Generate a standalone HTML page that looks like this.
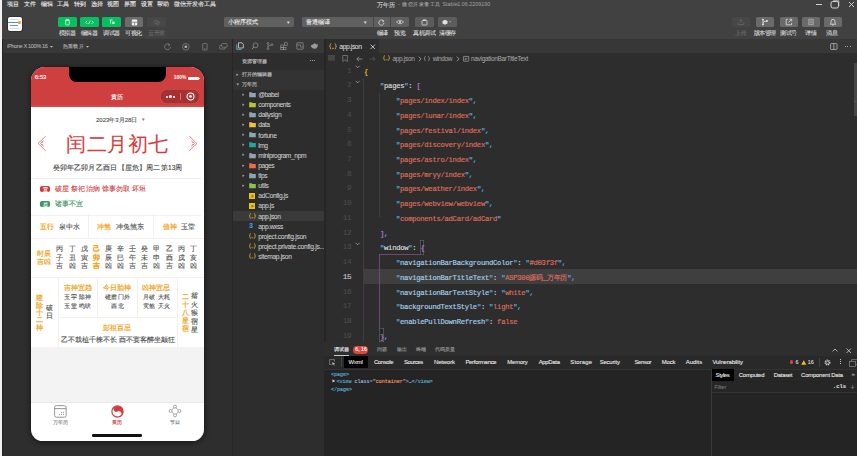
<!DOCTYPE html>
<html><head><meta charset="utf-8">
<style>
*{margin:0;padding:0;box-sizing:border-box}
html,body{width:857px;height:456px;overflow:hidden}
body{background:#2e2e2e;font-family:"Liberation Sans",sans-serif;position:relative}
.a{position:absolute;white-space:nowrap}
svg.a{overflow:visible}
.m{font-family:"Liberation Mono",monospace}
.a{-webkit-text-stroke:0.12px currentColor}
</style></head><body>

<div class="a" style="left:0px;top:0px;width:2px;height:456px;background:#f2f2f2;"></div>
<div class="a" style="left:2px;top:0px;width:855px;height:39px;background:#414141;"></div>
<div class="a " style="left:7.4px;top:1.35px;font-size:6.1px;line-height:6.1px;color:#e8e8e8;">项目</div>
<div class="a " style="left:24.099999999999998px;top:1.35px;font-size:6.1px;line-height:6.1px;color:#e8e8e8;">文件</div>
<div class="a " style="left:40.800000000000004px;top:1.35px;font-size:6.1px;line-height:6.1px;color:#e8e8e8;">编辑</div>
<div class="a " style="left:57.400000000000006px;top:1.35px;font-size:6.1px;line-height:6.1px;color:#e8e8e8;">工具</div>
<div class="a " style="left:74.0px;top:1.35px;font-size:6.1px;line-height:6.1px;color:#e8e8e8;">转到</div>
<div class="a " style="left:90.60000000000001px;top:1.35px;font-size:6.1px;line-height:6.1px;color:#e8e8e8;">选择</div>
<div class="a " style="left:107.2px;top:1.35px;font-size:6.1px;line-height:6.1px;color:#e8e8e8;">视图</div>
<div class="a " style="left:123.9px;top:1.35px;font-size:6.1px;line-height:6.1px;color:#e8e8e8;">界面</div>
<div class="a " style="left:140.5px;top:1.35px;font-size:6.1px;line-height:6.1px;color:#e8e8e8;">设置</div>
<div class="a " style="left:157.1px;top:1.35px;font-size:6.1px;line-height:6.1px;color:#e8e8e8;">帮助</div>
<div class="a " style="left:173.7px;top:1.35px;font-size:6.1px;line-height:6.1px;color:#e8e8e8;">微信开发者工具</div>
<div class="a " style="left:376.6px;top:1.65px;font-size:6.1px;line-height:6.1px;color:#d8d8d8;">万年历</div>
<div class="a " style="left:397.8px;top:1.95px;font-size:5.5px;line-height:5.5px;color:#a0a0a0;">-</div>
<div class="a " style="left:402px;top:2.05px;font-size:5.3px;line-height:5.3px;color:#a0a0a0;letter-spacing:0.5px">微信开发者工具</div>
<div class="a " style="left:442.4px;top:2.00px;font-size:5.4px;line-height:5.4px;color:#a0a0a0;-webkit-text-stroke:0">Stable</div>
<div class="a " style="left:457.2px;top:2.00px;font-size:5.4px;line-height:5.4px;color:#a0a0a0;-webkit-text-stroke:0">1.06.2209190</div>
<div class="a" style="left:816px;top:3.5px;width:6px;height:0.8px;background:#d0d0d0;"></div>
<svg class="a" style="left:830px;top:0px;" width="10" height="9" viewBox="0 0 10 9"><rect x="1" y="1.5" width="7.5" height="6.5" rx="1.8" fill="none" stroke="#d8d8d8" stroke-width="1"/><path d="M3.5 1.5 V0.8 H8.8 V6" fill="none" stroke="#d8d8d8" stroke-width="0.8"/></svg>
<svg class="a" style="left:848px;top:1px;" width="7" height="7" viewBox="0 0 7 7"><path d="M1 1 L6 6 M6 1 L1 6" stroke="#d8d8d8" stroke-width="0.9"/></svg>
<div class="a" style="left:7.5px;top:16.7px;width:14px;height:14px;background:#fbfbfb;border-radius:2px;box-shadow:0 0 0 0.8px #2c2c2c"></div>
<div class="a" style="left:8.3px;top:21.6px;width:10px;height:1.6px;background:#3a9ad0;"></div>
<div class="a" style="left:17.6px;top:20.9px;width:3.6px;height:2.8px;background:#f2a04a;border-radius:0.8px"></div>
<div class="a" style="left:9.6px;top:24.5px;width:8.6px;height:0.9px;background:#8a8a8a;"></div>
<div class="a" style="left:9.6px;top:19px;width:9px;height:0.4px;background:#dddddd;"></div>
<div class="a" style="left:9.6px;top:28.2px;width:9px;height:0.4px;background:#dddddd;"></div>
<div class="a" style="left:58px;top:16.9px;width:18.7px;height:10px;background:#07c160;border-radius:1.6px"></div>
<div class="a" style="left:80px;top:16.9px;width:18.9px;height:10px;background:#07c160;border-radius:1.6px"></div>
<div class="a" style="left:102.2px;top:16.9px;width:18.8px;height:10px;background:#07c160;border-radius:1.6px"></div>
<div class="a" style="left:124.6px;top:16.9px;width:18.2px;height:10px;background:#6c6c6c;border-radius:1.6px"></div>
<div class="a" style="left:147.4px;top:16.9px;width:18.4px;height:10px;background:#474747;border-radius:1.6px"></div>
<svg class="a" style="left:64.6px;top:18.8px;" width="5" height="7" viewBox="0 0 5 7"><rect x="0.7" y="0.6" width="3.5" height="5.3" rx="0.6" fill="none" stroke="#e6fff0" stroke-width="0.75"/><path d="M0.8 1.3 H4.1" stroke="#e6fff0" stroke-width="0.9"/></svg>
<svg class="a" style="left:85px;top:19.6px;" width="9" height="5" viewBox="0 0 9 5"><path d="M2.2 0.8 L0.7 2.3 L2.2 3.8 M6.8 0.8 L8.3 2.3 L6.8 3.8 M5.3 0.6 L3.7 4" fill="none" stroke="#e6fff0" stroke-width="0.8"/></svg>
<svg class="a" style="left:108.6px;top:19.2px;" width="6" height="6" viewBox="0 0 6 6"><path d="M0.6 1 H3.6 M1.6 1 V4.6" stroke="#e6fff0" stroke-width="0.8"/><rect x="3.2" y="2.6" width="2.4" height="2.4" fill="#d6f5e0"/></svg>
<svg class="a" style="left:130.5px;top:18.8px;" width="7" height="7" viewBox="0 0 7 7"><rect x="0.8" y="0.6" width="5.4" height="5.8" rx="0.8" fill="#f0f0f0"/><path d="M1 3.2 H6 M3.6 3.2 V6.4" stroke="#6c6c6c" stroke-width="0.7"/></svg>
<svg class="a" style="left:153px;top:18.8px;" width="8" height="7" viewBox="0 0 8 7"><circle cx="3" cy="3.2" r="2" fill="none" stroke="#666" stroke-width="0.7"/><circle cx="5" cy="4" r="1.6" fill="none" stroke="#666" stroke-width="0.7"/></svg>
<div class="a " style="left:58.8px;top:30.30px;font-size:6px;line-height:6px;color:#d6d6d6;letter-spacing:-0.5px">模拟器</div>
<div class="a " style="left:80.8px;top:30.30px;font-size:6px;line-height:6px;color:#d6d6d6;letter-spacing:-0.5px">编辑器</div>
<div class="a " style="left:103px;top:30.30px;font-size:6px;line-height:6px;color:#d6d6d6;letter-spacing:-0.5px">调试器</div>
<div class="a " style="left:125.3px;top:30.30px;font-size:6px;line-height:6px;color:#d6d6d6;letter-spacing:-0.5px">可视化</div>
<div class="a " style="left:148.4px;top:30.30px;font-size:6px;line-height:6px;color:#707070;letter-spacing:-0.5px">云开发</div>
<div class="a" style="left:224px;top:16.9px;width:70px;height:10px;background:#606060;border-radius:1.6px"></div>
<div class="a " style="left:228px;top:19.90px;font-size:5.8px;line-height:5.8px;color:#e6e6e6;">小程序模式</div>
<div class="a " style="left:287px;top:19.50px;font-size:5px;line-height:5px;color:#ddd;">▾</div>
<div class="a" style="left:302px;top:16.9px;width:107px;height:10px;background:#606060;border-radius:1.6px"></div>
<div class="a " style="left:306px;top:19.90px;font-size:5.8px;line-height:5.8px;color:#e6e6e6;">普通编译</div>
<div class="a " style="left:364px;top:19.50px;font-size:5px;line-height:5px;color:#ddd;">▾</div>
<div class="a" style="left:372.5px;top:16.9px;width:0.8px;height:10px;background:#474747;"></div>
<div class="a" style="left:390px;top:16.9px;width:0.8px;height:10px;background:#474747;"></div>
<svg class="a" style="left:377.5px;top:18.5px;" width="7" height="7" viewBox="0 0 7 7"><path d="M5.6 2.2 A2.6 2.6 0 1 0 6 4" fill="none" stroke="#e0e0e0" stroke-width="0.8"/><path d="M4.6 0.8 L6 2.4 L4.2 3" fill="none" stroke="#e0e0e0" stroke-width="0.7"/></svg>
<svg class="a" style="left:395.5px;top:19px;" width="8" height="6" viewBox="0 0 8 6"><path d="M0.5 3 Q4 -0.5 7.5 3 Q4 6.5 0.5 3Z" fill="none" stroke="#e0e0e0" stroke-width="0.7"/><circle cx="4" cy="3" r="1" fill="#e0e0e0"/></svg>
<div class="a" style="left:415px;top:16.9px;width:19px;height:10px;background:#5c5c5c;border-radius:1.6px"></div>
<div class="a" style="left:438px;top:16.9px;width:18.8px;height:10px;background:#5c5c5c;border-radius:1.6px"></div>
<svg class="a" style="left:421px;top:18.5px;" width="7" height="7" viewBox="0 0 7 7"><rect x="1" y="1.5" width="5" height="4.5" rx="0.6" fill="none" stroke="#e0e0e0" stroke-width="0.8"/><path d="M2.5 1.5 V0.5 H4.5 V1.5" fill="none" stroke="#e0e0e0" stroke-width="0.6"/></svg>
<svg class="a" style="left:442px;top:18.8px;" width="10" height="6" viewBox="0 0 10 6"><path d="M0.5 2 L3 0.7 L5.5 2 V4.5 L3 5.8 L0.5 4.5Z" fill="#e0e0e0"/><path d="M7.2 2.6 L9 2.6 L8.1 3.6Z" fill="#ddd"/></svg>
<div class="a " style="left:376.5px;top:30.30px;font-size:6px;line-height:6px;color:#d6d6d6;letter-spacing:-0.5px">编译</div>
<div class="a " style="left:394.2px;top:30.30px;font-size:6px;line-height:6px;color:#d6d6d6;letter-spacing:-0.5px">预览</div>
<div class="a " style="left:413px;top:30.30px;font-size:6px;line-height:6px;color:#d6d6d6;letter-spacing:-0.5px">真机调试</div>
<div class="a " style="left:439px;top:30.30px;font-size:6px;line-height:6px;color:#d6d6d6;letter-spacing:-0.5px">清缓存</div>
<div class="a" style="left:731.5px;top:16.9px;width:18.5px;height:10px;background:#474747;border-radius:1.6px"></div>
<div class="a" style="left:755.7px;top:16.9px;width:18.3px;height:10px;background:#6a6a6a;border-radius:1.6px"></div>
<div class="a" style="left:779.5px;top:16.9px;width:18px;height:10px;background:#6a6a6a;border-radius:1.6px"></div>
<div class="a" style="left:801.5px;top:16.9px;width:18px;height:10px;background:#6a6a6a;border-radius:1.6px"></div>
<div class="a" style="left:823.7px;top:16.9px;width:18.3px;height:10px;background:#6a6a6a;border-radius:1.6px"></div>
<svg class="a" style="left:737px;top:18.3px;" width="8" height="8" viewBox="0 0 8 8"><path d="M4 5 V1.5 M2.5 3 L4 1.5 L5.5 3 M1.2 4.5 V6.5 H6.8 V4.5" fill="none" stroke="#6a6a6a" stroke-width="0.7"/></svg>
<svg class="a" style="left:761px;top:18.3px;" width="8" height="8" viewBox="0 0 8 8"><circle cx="2" cy="1.6" r="0.9" fill="#eee"/><circle cx="2" cy="6.4" r="0.9" fill="#eee"/><circle cx="6" cy="3" r="0.9" fill="#eee"/><path d="M2 1.6 V6.4 M2 5 Q2 3.2 6 3" fill="none" stroke="#eee" stroke-width="0.7"/></svg>
<svg class="a" style="left:785px;top:18.3px;" width="8" height="8" viewBox="0 0 8 8"><path d="M3 1.3 H1.2 V6.8 H6.6 V5" fill="none" stroke="#eee" stroke-width="0.7"/><path d="M3.5 4.5 L6.5 1.3 M4.5 1.2 H6.7 V3.4" fill="none" stroke="#eee" stroke-width="0.7"/></svg>
<svg class="a" style="left:807px;top:18.3px;" width="8" height="8" viewBox="0 0 8 8"><rect x="1.2" y="0.8" width="5.6" height="6.4" rx="0.5" fill="#9a9a9a"/><path d="M2.3 2.5 H5.7 M2.3 4 H5.7 M2.3 5.5 H5.7" stroke="#6a6a6a" stroke-width="0.6"/></svg>
<svg class="a" style="left:829px;top:18.3px;" width="8" height="8" viewBox="0 0 8 8"><path d="M2 5.5 V3.5 Q2 1.3 4 1.3 Q6 1.3 6 3.5 V5.5 L6.8 6.2 H1.2Z" fill="none" stroke="#eee" stroke-width="0.7"/><circle cx="4" cy="6.9" r="0.6" fill="#eee"/></svg>
<div class="a " style="left:735px;top:30.30px;font-size:6px;line-height:6px;color:#6e6e6e;letter-spacing:-0.5px">上传</div>
<div class="a " style="left:753.8px;top:30.30px;font-size:6px;line-height:6px;color:#d6d6d6;letter-spacing:-0.5px">版本管理</div>
<div class="a " style="left:780px;top:30.30px;font-size:6px;line-height:6px;color:#d6d6d6;letter-spacing:-0.5px">测试号</div>
<div class="a " style="left:805px;top:30.30px;font-size:6px;line-height:6px;color:#d6d6d6;letter-spacing:-0.5px">详情</div>
<div class="a " style="left:826.2px;top:30.30px;font-size:6px;line-height:6px;color:#d6d6d6;letter-spacing:-0.5px">消息</div>
<div class="a" style="left:2px;top:39px;width:1px;height:417px;background:#232323;"></div>
<div class="a" style="left:3px;top:39px;width:229px;height:14px;background:#383838;"></div>
<div class="a" style="left:3px;top:53px;width:229px;height:403px;background:#2e2e2e;"></div>
<div class="a " style="left:7px;top:43.80px;font-size:5.6px;line-height:5.6px;color:#a8a8a8;letter-spacing:-0.359px;">iPhone X 100% 16</div>
<svg class="a" style="left:49.6px;top:45.8px;" width="3" height="2" viewBox="0 0 3 2"><path d="M0 0 H3 L1.5 1.8Z" fill="#bbb"/></svg>
<div class="a " style="left:63px;top:43.90px;font-size:5.4px;line-height:5.4px;color:#a8a8a8;">热重载 开</div>
<svg class="a" style="left:85.8px;top:45.8px;" width="3" height="2" viewBox="0 0 3 2"><path d="M0 0 H3 L1.5 1.8Z" fill="#bbb"/></svg>
<svg class="a" style="left:164px;top:43px;" width="7" height="7" viewBox="0 0 7 7"><path d="M5.8 2 A2.9 2.9 0 1 0 6.4 4" fill="none" stroke="#8a8a8a" stroke-width="0.7"/><path d="M4.2 0.6 L5.9 2.1 L4 2.8" fill="none" stroke="#8a8a8a" stroke-width="0.6"/></svg>
<svg class="a" style="left:182.3px;top:42.8px;" width="8" height="8" viewBox="0 0 8 8"><circle cx="3.8" cy="3.8" r="3.3" fill="none" stroke="#8a8a8a" stroke-width="0.7"/><circle cx="3.8" cy="3.8" r="1.3" fill="#bbb"/></svg>
<svg class="a" style="left:201.5px;top:43px;" width="6" height="8" viewBox="0 0 6 8"><rect x="0.7" y="0.6" width="4.4" height="6.4" rx="0.6" fill="none" stroke="#8a8a8a" stroke-width="0.7"/><path d="M2.2 5.6 H3.6" stroke="#8a8a8a" stroke-width="0.6"/></svg>
<svg class="a" style="left:218.5px;top:43px;" width="9" height="7" viewBox="0 0 9 7"><rect x="0.6" y="2.4" width="5.6" height="3.6" rx="1" fill="none" stroke="#8a8a8a" stroke-width="0.7"/><rect x="2.6" y="0.6" width="5.6" height="3.6" rx="1" fill="#363636" stroke="#8a8a8a" stroke-width="0.7"/></svg>
<div class="a" style="left:31px;top:66.6px;width:173px;height:374.4px;border-radius:14px 14px 11.5px 11.5px;background:#fff;overflow:hidden;box-shadow:0 1px 5px 1px rgba(0,0,0,0.45)">
<div class="a" style="left:0px;top:0.0px;width:173px;height:40px;background:#d03f3f;"></div>
<div class="a" style="left:0px;top:38.4px;width:173px;height:1.6px;background:#d94646;"></div>
<div class="a" style="left:37.7px;top:-6.6px;width:97.1px;height:21.8px;background:#000;border-radius:0 0 7.5px 7.5px"></div>
<div class="a " style="left:3.8px;top:8.05px;font-size:5.9px;line-height:5.9px;color:#fff;-webkit-text-stroke:0.15px #fff">6:53</div>
<div class="a " style="left:142.8px;top:9.15px;font-size:4.9px;line-height:4.9px;color:#fff;font-weight:bold;-webkit-text-stroke:0">100%</div>
<div class="a" style="left:157.2px;top:10.0px;width:10.5px;height:3.6px;background:#fff;border-radius:0.8px"></div>
<div class="a" style="left:168px;top:11.0px;width:0.8px;height:1.6px;background:#fff;"></div>
<div class="a " style="left:-63.8px;width:300px;text-align:center;top:27.60px;font-size:6.2px;line-height:6.2px;color:#fff;">黄历</div>
<div class="a" style="left:129.4px;top:22.7px;width:39.8px;height:14.3px;background:#a93030;border-radius:7.2px;box-shadow:inset 0 0 0 0.5px rgba(255,255,255,0.25)"></div>
<div class="a" style="left:134.8px;top:29.1px;width:1.9px;height:1.9px;background:#fff;border-radius:50%"></div>
<div class="a" style="left:138.1px;top:28.5px;width:3px;height:3px;background:#fff;border-radius:50%"></div>
<div class="a" style="left:142.4px;top:29.1px;width:1.9px;height:1.9px;background:#fff;border-radius:50%"></div>
<div class="a" style="left:149.3px;top:26.4px;width:0.6px;height:7.2px;background:rgba(255,255,255,0.35);"></div>
<svg class="a" style="left:154.5px;top:25.6px;" width="9" height="9" viewBox="0 0 9 9"><circle cx="4.5" cy="4.4" r="3.5" fill="none" stroke="#fff" stroke-width="1.05"/><circle cx="4.5" cy="4.4" r="1.3" fill="#fff"/></svg>
<div class="a " style="left:65px;top:50.30px;font-size:6.0px;line-height:6.0px;color:#505050;">2023年3月28日</div>
<div class="a " style="left:110.5px;top:51.15px;font-size:4.5px;line-height:4.5px;color:#777;">▾</div>
<svg class="a" style="left:6px;top:68.4px;" width="10" height="17" viewBox="0 0 10 17"><path d="M8.8 1.1 L1.1 8.5 L8.8 15.9" fill="none" stroke="#e07a7a" stroke-width="0.9"/><path d="M6.8 5.6 L3.4 8.5 L6.8 11.4 M4 7.3 H6.2 M4 9.7 H6.2" fill="none" stroke="#e07a7a" stroke-width="0.8"/></svg>
<svg class="a" style="left:157px;top:68.4px;" width="10" height="17" viewBox="0 0 10 17"><path d="M1.2 1.1 L8.9 8.5 L1.2 15.9" fill="none" stroke="#e07a7a" stroke-width="0.9"/><path d="M3.2 5.6 L6.6 8.5 L3.2 11.4 M6 7.3 H3.8 M6 9.7 H3.8" fill="none" stroke="#e07a7a" stroke-width="0.8"/></svg>
<div class="a " style="left:-63.400000000000006px;width:300px;text-align:center;top:67.80px;font-size:20.4px;line-height:20.4px;color:#d03f3f;letter-spacing:0.45px">闰二月初七</div>
<div class="a " style="left:21.5px;top:98.62px;font-size:6.55px;line-height:6.55px;color:#444;word-spacing:-1.1px">癸卯年 乙卯月 乙酉日 【屋危】 周二 第13周</div>
<div class="a" style="left:0px;top:111.2px;width:170px;height:0.6px;background:#eee;"></div>
<div class="a" style="left:9.3px;top:119.2px;width:10px;height:6.6px;background:#d03f3f;border-radius:1.8px"></div>
<div class="a " style="left:-135.7px;width:300px;text-align:center;top:120.10px;font-size:5.2px;line-height:5.2px;color:#fff;">宜</div>
<div class="a " style="left:23.7px;top:119.00px;font-size:6.6px;line-height:6.6px;color:#d03f3f;">破屋 祭祀 治病 馀事勿取 坏垣</div>
<div class="a" style="left:9.3px;top:134.2px;width:10px;height:6.6px;background:#3b9962;border-radius:1.8px"></div>
<div class="a " style="left:-135.7px;width:300px;text-align:center;top:135.10px;font-size:5.2px;line-height:5.2px;color:#fff;">忌</div>
<div class="a " style="left:23.7px;top:134.30px;font-size:6.6px;line-height:6.6px;color:#3b9962;">诸事不宜</div>
<div class="a" style="left:0px;top:148.2px;width:170px;height:0.6px;background:#f3f1ed;"></div>
<div class="a " style="left:8.9px;top:157.05px;font-size:6.9px;line-height:6.9px;color:#f2a215;-webkit-text-stroke:0.2px #f2a215">五行</div>
<div class="a " style="left:27.6px;top:157.20px;font-size:6.6px;line-height:6.6px;color:#505050;">泉中水</div>
<div class="a" style="left:57.2px;top:147.9px;width:0.6px;height:23.2px;background:#f3f1ed;"></div>
<div class="a " style="left:66px;top:157.05px;font-size:6.9px;line-height:6.9px;color:#f2a215;-webkit-text-stroke:0.2px #f2a215">冲煞</div>
<div class="a " style="left:84.5px;top:157.20px;font-size:6.6px;line-height:6.6px;color:#505050;">冲兔煞东</div>
<div class="a" style="left:122px;top:147.9px;width:0.6px;height:23.2px;background:#f3f1ed;"></div>
<div class="a " style="left:131.5px;top:157.05px;font-size:6.9px;line-height:6.9px;color:#f2a215;-webkit-text-stroke:0.2px #f2a215">值神</div>
<div class="a " style="left:150px;top:157.20px;font-size:6.6px;line-height:6.6px;color:#505050;">玉堂</div>
<div class="a" style="left:0px;top:171.0px;width:173px;height:0.6px;background:#f3f1ed;"></div>
<div class="a " style="left:5.9px;top:183.95px;font-size:6.9px;line-height:6.9px;color:#f2a215;-webkit-text-stroke:0.2px #f2a215">时辰</div>
<div class="a " style="left:5.9px;top:192.75px;font-size:6.9px;line-height:6.9px;color:#f2a215;-webkit-text-stroke:0.2px #f2a215">吉凶</div>
<div class="a " style="left:-121.1px;width:300px;text-align:center;top:179.65px;font-size:6.9px;line-height:6.9px;color:#505050;">丙</div>
<div class="a " style="left:-121.1px;width:300px;text-align:center;top:188.10px;font-size:6.9px;line-height:6.9px;color:#505050;">子</div>
<div class="a " style="left:-121.1px;width:300px;text-align:center;top:196.55px;font-size:6.9px;line-height:6.9px;color:#505050;">吉</div>
<div class="a " style="left:-108.97px;width:300px;text-align:center;top:179.65px;font-size:6.9px;line-height:6.9px;color:#505050;">丁</div>
<div class="a " style="left:-108.97px;width:300px;text-align:center;top:188.10px;font-size:6.9px;line-height:6.9px;color:#505050;">丑</div>
<div class="a " style="left:-108.97px;width:300px;text-align:center;top:196.55px;font-size:6.9px;line-height:6.9px;color:#505050;">凶</div>
<div class="a " style="left:-96.84px;width:300px;text-align:center;top:179.65px;font-size:6.9px;line-height:6.9px;color:#505050;">戊</div>
<div class="a " style="left:-96.84px;width:300px;text-align:center;top:188.10px;font-size:6.9px;line-height:6.9px;color:#505050;">寅</div>
<div class="a " style="left:-96.84px;width:300px;text-align:center;top:196.55px;font-size:6.9px;line-height:6.9px;color:#505050;">吉</div>
<div class="a " style="left:-84.71px;width:300px;text-align:center;top:179.65px;font-size:6.9px;line-height:6.9px;color:#f2a215;-webkit-text-stroke:0.45px #f2a215">己</div>
<div class="a " style="left:-84.71px;width:300px;text-align:center;top:188.10px;font-size:6.9px;line-height:6.9px;color:#f2a215;-webkit-text-stroke:0.45px #f2a215">卯</div>
<div class="a " style="left:-84.71px;width:300px;text-align:center;top:196.55px;font-size:6.9px;line-height:6.9px;color:#f2a215;-webkit-text-stroke:0.45px #f2a215">吉</div>
<div class="a " style="left:-72.58px;width:300px;text-align:center;top:179.65px;font-size:6.9px;line-height:6.9px;color:#505050;">庚</div>
<div class="a " style="left:-72.58px;width:300px;text-align:center;top:188.10px;font-size:6.9px;line-height:6.9px;color:#505050;">辰</div>
<div class="a " style="left:-72.58px;width:300px;text-align:center;top:196.55px;font-size:6.9px;line-height:6.9px;color:#505050;">凶</div>
<div class="a " style="left:-60.45px;width:300px;text-align:center;top:179.65px;font-size:6.9px;line-height:6.9px;color:#505050;">辛</div>
<div class="a " style="left:-60.45px;width:300px;text-align:center;top:188.10px;font-size:6.9px;line-height:6.9px;color:#505050;">巳</div>
<div class="a " style="left:-60.45px;width:300px;text-align:center;top:196.55px;font-size:6.9px;line-height:6.9px;color:#505050;">凶</div>
<div class="a " style="left:-48.31999999999999px;width:300px;text-align:center;top:179.65px;font-size:6.9px;line-height:6.9px;color:#505050;">壬</div>
<div class="a " style="left:-48.31999999999999px;width:300px;text-align:center;top:188.10px;font-size:6.9px;line-height:6.9px;color:#505050;">午</div>
<div class="a " style="left:-48.31999999999999px;width:300px;text-align:center;top:196.55px;font-size:6.9px;line-height:6.9px;color:#505050;">吉</div>
<div class="a " style="left:-36.19px;width:300px;text-align:center;top:179.65px;font-size:6.9px;line-height:6.9px;color:#505050;">癸</div>
<div class="a " style="left:-36.19px;width:300px;text-align:center;top:188.10px;font-size:6.9px;line-height:6.9px;color:#505050;">未</div>
<div class="a " style="left:-36.19px;width:300px;text-align:center;top:196.55px;font-size:6.9px;line-height:6.9px;color:#505050;">吉</div>
<div class="a " style="left:-24.060000000000002px;width:300px;text-align:center;top:179.65px;font-size:6.9px;line-height:6.9px;color:#505050;">甲</div>
<div class="a " style="left:-24.060000000000002px;width:300px;text-align:center;top:188.10px;font-size:6.9px;line-height:6.9px;color:#505050;">申</div>
<div class="a " style="left:-24.060000000000002px;width:300px;text-align:center;top:196.55px;font-size:6.9px;line-height:6.9px;color:#505050;">凶</div>
<div class="a " style="left:-11.930000000000007px;width:300px;text-align:center;top:179.65px;font-size:6.9px;line-height:6.9px;color:#505050;">乙</div>
<div class="a " style="left:-11.930000000000007px;width:300px;text-align:center;top:188.10px;font-size:6.9px;line-height:6.9px;color:#505050;">酉</div>
<div class="a " style="left:-11.930000000000007px;width:300px;text-align:center;top:196.55px;font-size:6.9px;line-height:6.9px;color:#505050;">吉</div>
<div class="a " style="left:0.19999999999998863px;width:300px;text-align:center;top:179.65px;font-size:6.9px;line-height:6.9px;color:#505050;">丙</div>
<div class="a " style="left:0.19999999999998863px;width:300px;text-align:center;top:188.10px;font-size:6.9px;line-height:6.9px;color:#505050;">戌</div>
<div class="a " style="left:0.19999999999998863px;width:300px;text-align:center;top:196.55px;font-size:6.9px;line-height:6.9px;color:#505050;">凶</div>
<div class="a " style="left:12.330000000000013px;width:300px;text-align:center;top:179.65px;font-size:6.9px;line-height:6.9px;color:#505050;">丁</div>
<div class="a " style="left:12.330000000000013px;width:300px;text-align:center;top:188.10px;font-size:6.9px;line-height:6.9px;color:#505050;">亥</div>
<div class="a " style="left:12.330000000000013px;width:300px;text-align:center;top:196.55px;font-size:6.9px;line-height:6.9px;color:#505050;">凶</div>
<div class="a" style="left:0px;top:210.6px;width:173px;height:0.6px;background:#f3f1ed;"></div>
<div class="a" style="left:27.2px;top:210.9px;width:0.6px;height:69.5px;background:#f3f1ed;"></div>
<div class="a" style="left:66.4px;top:210.9px;width:0.6px;height:40px;background:#f3f1ed;"></div>
<div class="a" style="left:106.3px;top:210.9px;width:0.6px;height:40px;background:#f3f1ed;"></div>
<div class="a" style="left:145.5px;top:210.9px;width:0.6px;height:69.5px;background:#f3f1ed;"></div>
<div class="a" style="left:27.5px;top:250.6px;width:118px;height:0.6px;background:#f3f1ed;"></div>
<div class="a" style="left:0px;top:280.2px;width:173px;height:0.6px;background:#f3f1ed;"></div>
<div class="a " style="left:-141.1px;width:300px;text-align:center;top:228.55px;font-size:6.9px;line-height:6.9px;color:#f2a215;-webkit-text-stroke:0.2px #f2a215">建</div>
<div class="a " style="left:-141.1px;width:300px;text-align:center;top:235.97px;font-size:6.9px;line-height:6.9px;color:#f2a215;-webkit-text-stroke:0.2px #f2a215">除</div>
<div class="a " style="left:-141.1px;width:300px;text-align:center;top:243.39px;font-size:6.9px;line-height:6.9px;color:#f2a215;-webkit-text-stroke:0.2px #f2a215">十</div>
<div class="a " style="left:-141.1px;width:300px;text-align:center;top:250.81px;font-size:6.9px;line-height:6.9px;color:#f2a215;-webkit-text-stroke:0.2px #f2a215">二</div>
<div class="a " style="left:-141.1px;width:300px;text-align:center;top:258.23px;font-size:6.9px;line-height:6.9px;color:#f2a215;-webkit-text-stroke:0.2px #f2a215">神</div>
<div class="a " style="left:-131.9px;width:300px;text-align:center;top:238.45px;font-size:6.9px;line-height:6.9px;color:#505050;">破</div>
<div class="a " style="left:-131.9px;width:300px;text-align:center;top:246.35px;font-size:6.9px;line-height:6.9px;color:#505050;">日</div>
<div class="a " style="left:-103.1px;width:300px;text-align:center;top:218.20px;font-size:6.8px;line-height:6.8px;color:#f2a215;-webkit-text-stroke:0.2px #f2a215">吉神宜趋</div>
<div class="a " style="left:-102.9px;width:300px;text-align:center;top:228.45px;font-size:5.9px;line-height:5.9px;color:#505050;letter-spacing:0.35px">玉宇 除神</div>
<div class="a " style="left:-102.9px;width:300px;text-align:center;top:237.35px;font-size:5.9px;line-height:5.9px;color:#505050;letter-spacing:0.35px">玉堂 鸣吠</div>
<div class="a " style="left:-63.599999999999994px;width:300px;text-align:center;top:218.20px;font-size:6.8px;line-height:6.8px;color:#f2a215;-webkit-text-stroke:0.2px #f2a215">今日胎神</div>
<div class="a " style="left:-63.400000000000006px;width:300px;text-align:center;top:228.45px;font-size:5.9px;line-height:5.9px;color:#505050;letter-spacing:0.35px">碓磨门外</div>
<div class="a " style="left:-63.400000000000006px;width:300px;text-align:center;top:237.35px;font-size:5.9px;line-height:5.9px;color:#505050;letter-spacing:0.35px">西北</div>
<div class="a " style="left:-24.599999999999994px;width:300px;text-align:center;top:218.20px;font-size:6.8px;line-height:6.8px;color:#f2a215;-webkit-text-stroke:0.2px #f2a215">凶神宜忌</div>
<div class="a " style="left:-24.400000000000006px;width:300px;text-align:center;top:228.45px;font-size:5.9px;line-height:5.9px;color:#505050;letter-spacing:0.35px">月破 大耗</div>
<div class="a " style="left:-24.400000000000006px;width:300px;text-align:center;top:237.35px;font-size:5.9px;line-height:5.9px;color:#505050;letter-spacing:0.35px">灾煞 天火</div>
<div class="a " style="left:4.099999999999994px;width:300px;text-align:center;top:227.55px;font-size:6.9px;line-height:6.9px;color:#f2a215;-webkit-text-stroke:0.2px #f2a215">二</div>
<div class="a " style="left:4.099999999999994px;width:300px;text-align:center;top:235.50px;font-size:6.9px;line-height:6.9px;color:#f2a215;-webkit-text-stroke:0.2px #f2a215">十</div>
<div class="a " style="left:4.099999999999994px;width:300px;text-align:center;top:243.45px;font-size:6.9px;line-height:6.9px;color:#f2a215;-webkit-text-stroke:0.2px #f2a215">八</div>
<div class="a " style="left:4.099999999999994px;width:300px;text-align:center;top:251.40px;font-size:6.9px;line-height:6.9px;color:#f2a215;-webkit-text-stroke:0.2px #f2a215">星</div>
<div class="a " style="left:4.099999999999994px;width:300px;text-align:center;top:259.35px;font-size:6.9px;line-height:6.9px;color:#f2a215;-webkit-text-stroke:0.2px #f2a215">宿</div>
<div class="a " style="left:13.300000000000011px;width:300px;text-align:center;top:226.75px;font-size:6.9px;line-height:6.9px;color:#505050;">觜</div>
<div class="a " style="left:13.300000000000011px;width:300px;text-align:center;top:235.15px;font-size:6.9px;line-height:6.9px;color:#505050;">火</div>
<div class="a " style="left:13.300000000000011px;width:300px;text-align:center;top:243.55px;font-size:6.9px;line-height:6.9px;color:#505050;">猴</div>
<div class="a " style="left:13.300000000000011px;width:300px;text-align:center;top:251.95px;font-size:6.9px;line-height:6.9px;color:#505050;">宿</div>
<div class="a " style="left:13.300000000000011px;width:300px;text-align:center;top:260.35px;font-size:6.9px;line-height:6.9px;color:#505050;">星</div>
<div class="a " style="left:-63.599999999999994px;width:300px;text-align:center;top:258.30px;font-size:6.8px;line-height:6.8px;color:#f2a215;-webkit-text-stroke:0.2px #f2a215">彭祖百忌</div>
<div class="a " style="left:-63.099999999999994px;width:300px;text-align:center;top:270.10px;font-size:6.6px;line-height:6.6px;color:#505050;">乙不栽植千株不长 酉不宴客醉坐颠狂</div>
<div class="a" style="left:0px;top:280.7px;width:173px;height:55.3px;background:#f3f3f3;"></div>
<div class="a" style="left:0px;top:335.9px;width:173px;height:0.6px;background:#e8e8e8;"></div>
<svg class="a" style="left:22.5px;top:338.4px;" width="13" height="13" viewBox="0 0 13 13"><rect x="0.6" y="0.6" width="11.6" height="11.6" rx="1.8" fill="none" stroke="#8a8a8a" stroke-width="0.9"/><path d="M0.8 3.6 H12" stroke="#8a8a8a" stroke-width="0.9"/><path d="M5 9.6 H6 M7 9.6 H8 M9 9.6 H10 M7 7.6 H8 M9 7.6 H10" stroke="#8a8a8a" stroke-width="0.9"/></svg>
<div class="a " style="left:-121px;width:300px;text-align:center;top:354.45px;font-size:4.7px;line-height:4.7px;color:#808080;">万年历</div>
<svg class="a" style="left:79.5px;top:338.3px;" width="13" height="13" viewBox="0 0 13 13"><circle cx="6.5" cy="6.5" r="5.6" fill="none" stroke="#d03f3f" stroke-width="1.2"/><path d="M6.5 0.9 A5.6 5.6 0 0 1 6.5 12.1 A2.8 2.8 0 0 0 6.5 6.5 A2.8 2.8 0 0 1 6.5 0.9Z" fill="#d03f3f" transform="rotate(-25 6.5 6.5)"/></svg>
<div class="a " style="left:-63.900000000000006px;width:300px;text-align:center;top:354.45px;font-size:4.7px;line-height:4.7px;color:#d03f3f;font-weight:bold;-webkit-text-stroke:0">黄历</div>
<svg class="a" style="left:136.6px;top:337.8px;" width="14" height="14" viewBox="0 0 14 14"><path d="M5.9 3.9 L3.9 5.9 M8.1 3.9 L10.1 5.9 M5.9 10.1 L3.9 8.1 M8.1 10.1 L10.1 8.1" stroke="#8a8a8a" stroke-width="0.75"/><circle cx="7" cy="2.6" r="1.5" fill="none" stroke="#8a8a8a" stroke-width="0.75"/><circle cx="7" cy="11.4" r="1.5" fill="none" stroke="#8a8a8a" stroke-width="0.75"/><circle cx="2.6" cy="7" r="1.5" fill="none" stroke="#8a8a8a" stroke-width="0.75"/><circle cx="11.4" cy="7" r="1.5" fill="none" stroke="#8a8a8a" stroke-width="0.75"/></svg>
<div class="a " style="left:-6.400000000000006px;width:300px;text-align:center;top:354.45px;font-size:4.7px;line-height:4.7px;color:#808080;">节日</div>
<div class="a" style="left:60.9px;top:367.7px;width:50.4px;height:2.4px;background:#111;border-radius:1.2px"></div>
</div>
<div class="a" style="left:232px;top:39px;width:1px;height:417px;background:#262626;"></div>
<div class="a" style="left:233px;top:39px;width:91px;height:14px;background:#383838;"></div>
<div class="a" style="left:233px;top:53px;width:91px;height:403px;background:#2d2d2d;"></div>
<svg class="a" style="left:236px;top:42px;" width="8" height="8" viewBox="0 0 8 8"><path d="M2.5 0.8 H6 L7.3 2.2 V6 H2.5Z" fill="none" stroke="#c8d8e0" stroke-width="0.8"/><path d="M0.8 2.4 V7.3 H5.5" fill="none" stroke="#6cc8d8" stroke-width="0.8"/></svg>
<svg class="a" style="left:251px;top:42px;" width="8" height="8" viewBox="0 0 8 8"><circle cx="4.6" cy="3.3" r="2.4" fill="none" stroke="#9a9a9a" stroke-width="0.7"/><path d="M2.9 5 L0.8 7.2" stroke="#9a9a9a" stroke-width="0.8"/></svg>
<svg class="a" style="left:265.5px;top:42px;" width="8" height="8" viewBox="0 0 8 8"><circle cx="2" cy="1.4" r="0.9" fill="none" stroke="#9a9a9a" stroke-width="0.6"/><circle cx="2" cy="6.6" r="0.9" fill="none" stroke="#9a9a9a" stroke-width="0.6"/><circle cx="6" cy="2.6" r="0.9" fill="none" stroke="#9a9a9a" stroke-width="0.6"/><path d="M2 2.3 V5.7 M2 5 Q2 3.5 5.2 3" fill="none" stroke="#9a9a9a" stroke-width="0.6"/></svg>
<svg class="a" style="left:280px;top:42px;" width="8" height="8" viewBox="0 0 8 8"><rect x="0.8" y="3" width="2.6" height="2.6" fill="none" stroke="#9a9a9a" stroke-width="0.6"/><rect x="0.8" y="5.6" width="2.6" height="2.1" fill="none" stroke="#9a9a9a" stroke-width="0.6"/><rect x="3.4" y="5.6" width="2.6" height="2.1" fill="none" stroke="#9a9a9a" stroke-width="0.6"/><rect x="4.6" y="0.8" width="2.6" height="2.6" fill="none" stroke="#9a9a9a" stroke-width="0.6"/></svg>
<svg class="a" style="left:295.5px;top:42px;" width="8" height="8" viewBox="0 0 8 8"><rect x="0.8" y="0.8" width="6.4" height="6.4" rx="0.6" fill="none" stroke="#9a9a9a" stroke-width="0.7"/><path d="M1 3 H4.5 V5 H7" fill="none" stroke="#9a9a9a" stroke-width="0.6"/></svg>
<svg class="a" style="left:309.5px;top:42px;" width="9" height="8" viewBox="0 0 9 8"><path d="M0.8 4.5 Q1 2.5 3 2.6 L5 1 Q5.5 2.2 6.5 2.5 L8 2 Q8 5 6 6.5 Q3 7.5 0.8 4.5Z" fill="#9a9a9a"/></svg>
<div class="a " style="left:241.8px;top:58.70px;font-size:5.4px;line-height:5.4px;color:#c8c8c8;">资源管理器</div>
<div class="a" style="left:309.8px;top:60.4px;width:1.1px;height:1.1px;background:#c0c0c0;border-radius:0.5px"></div>
<div class="a" style="left:312.1px;top:60.4px;width:1.1px;height:1.1px;background:#c0c0c0;border-radius:0.5px"></div>
<div class="a" style="left:314.40000000000003px;top:60.4px;width:1.1px;height:1.1px;background:#c0c0c0;border-radius:0.5px"></div>
<div class="a" style="left:233px;top:70px;width:91px;height:19.8px;background:#333333;"></div>
<svg class="a" style="left:236.4px;top:72.6px;" width="3" height="4" viewBox="0 0 3 4"><path d="M0.5 0.5 L2.4 1.8 L0.5 3.1Z" fill="#b8b8b8"/></svg>
<div class="a " style="left:241.8px;top:71.90px;font-size:5.4px;line-height:5.4px;color:#c8c8c8;">打开的编辑器</div>
<svg class="a" style="left:236px;top:83.4px;" width="4" height="3" viewBox="0 0 4 3"><path d="M0.5 0.5 L3.1 0.5 L1.8 2.4Z" fill="#b8b8b8"/></svg>
<div class="a " style="left:241.8px;top:81.90px;font-size:5.4px;line-height:5.4px;color:#c8c8c8;">万年历</div>
<svg class="a" style="left:242.2px;top:92.60000000000001px;" width="3" height="4" viewBox="0 0 3 4"><path d="M0.5 0.5 L2.4 1.8 L0.5 3.1Z" fill="#b8b8b8"/></svg>
<svg class="a" style="left:248.6px;top:91.80000000000001px;" width="7" height="5.4" viewBox="0 0 7 5.4"><path d="M0.2 0.2 H2.6 L3.3 1 H6.8 V5.2 H0.2Z" fill="#90a4ae"/></svg>
<div class="a " style="left:258.3px;top:92.05px;font-size:6.7px;line-height:6.7px;color:#cccccc;letter-spacing:-0.485px;-webkit-text-stroke:0.08px #ccc">@babel</div>
<svg class="a" style="left:242.2px;top:102.73px;" width="3" height="4" viewBox="0 0 3 4"><path d="M0.5 0.5 L2.4 1.8 L0.5 3.1Z" fill="#b8b8b8"/></svg>
<svg class="a" style="left:248.6px;top:101.93px;" width="7" height="5.4" viewBox="0 0 7 5.4"><path d="M0.2 0.2 H2.6 L3.3 1 H6.8 V5.2 H0.2Z" fill="#b8c830"/></svg>
<div class="a " style="left:258.3px;top:102.18px;font-size:6.7px;line-height:6.7px;color:#cccccc;letter-spacing:-0.424px;-webkit-text-stroke:0.08px #ccc">components</div>
<svg class="a" style="left:242.2px;top:112.86000000000001px;" width="3" height="4" viewBox="0 0 3 4"><path d="M0.5 0.5 L2.4 1.8 L0.5 3.1Z" fill="#b8b8b8"/></svg>
<svg class="a" style="left:248.6px;top:112.06000000000002px;" width="7" height="5.4" viewBox="0 0 7 5.4"><path d="M0.2 0.2 H2.6 L3.3 1 H6.8 V5.2 H0.2Z" fill="#90a4ae"/></svg>
<div class="a " style="left:258.3px;top:112.31px;font-size:6.7px;line-height:6.7px;color:#cccccc;letter-spacing:-0.340px;-webkit-text-stroke:0.08px #ccc">dailysign</div>
<svg class="a" style="left:242.2px;top:122.99000000000001px;" width="3" height="4" viewBox="0 0 3 4"><path d="M0.5 0.5 L2.4 1.8 L0.5 3.1Z" fill="#b8b8b8"/></svg>
<svg class="a" style="left:248.6px;top:122.19000000000001px;" width="7" height="5.4" viewBox="0 0 7 5.4"><path d="M0.2 0.2 H2.6 L3.3 1 H6.8 V5.2 H0.2Z" fill="#f7c03a"/></svg>
<div class="a " style="left:258.3px;top:122.44px;font-size:6.7px;line-height:6.7px;color:#cccccc;letter-spacing:-0.454px;-webkit-text-stroke:0.08px #ccc">data</div>
<svg class="a" style="left:242.2px;top:133.12px;" width="3" height="4" viewBox="0 0 3 4"><path d="M0.5 0.5 L2.4 1.8 L0.5 3.1Z" fill="#b8b8b8"/></svg>
<svg class="a" style="left:248.6px;top:132.32000000000002px;" width="7" height="5.4" viewBox="0 0 7 5.4"><path d="M0.2 0.2 H2.6 L3.3 1 H6.8 V5.2 H0.2Z" fill="#90a4ae"/></svg>
<div class="a " style="left:258.3px;top:132.57px;font-size:6.7px;line-height:6.7px;color:#cccccc;letter-spacing:-0.363px;-webkit-text-stroke:0.08px #ccc">fortune</div>
<svg class="a" style="left:242.2px;top:143.25px;" width="3" height="4" viewBox="0 0 3 4"><path d="M0.5 0.5 L2.4 1.8 L0.5 3.1Z" fill="#b8b8b8"/></svg>
<svg class="a" style="left:248.6px;top:142.45000000000002px;" width="7" height="5.4" viewBox="0 0 7 5.4"><path d="M0.2 0.2 H2.6 L3.3 1 H6.8 V5.2 H0.2Z" fill="#26a69a"/></svg>
<div class="a " style="left:258.3px;top:142.70px;font-size:6.7px;line-height:6.7px;color:#cccccc;letter-spacing:-0.564px;-webkit-text-stroke:0.08px #ccc">img</div>
<svg class="a" style="left:242.2px;top:153.38px;" width="3" height="4" viewBox="0 0 3 4"><path d="M0.5 0.5 L2.4 1.8 L0.5 3.1Z" fill="#b8b8b8"/></svg>
<svg class="a" style="left:248.6px;top:152.58px;" width="7" height="5.4" viewBox="0 0 7 5.4"><path d="M0.2 0.2 H2.6 L3.3 1 H6.8 V5.2 H0.2Z" fill="#90a4ae"/></svg>
<div class="a " style="left:258.3px;top:152.83px;font-size:6.7px;line-height:6.7px;color:#cccccc;letter-spacing:-0.403px;-webkit-text-stroke:0.08px #ccc">miniprogram_npm</div>
<svg class="a" style="left:242.2px;top:163.51px;" width="3" height="4" viewBox="0 0 3 4"><path d="M0.5 0.5 L2.4 1.8 L0.5 3.1Z" fill="#b8b8b8"/></svg>
<svg class="a" style="left:248.6px;top:162.71px;" width="7" height="5.4" viewBox="0 0 7 5.4"><path d="M0.2 0.2 H2.6 L3.3 1 H6.8 V5.2 H0.2Z" fill="#f4693d"/></svg>
<div class="a " style="left:258.3px;top:162.96px;font-size:6.7px;line-height:6.7px;color:#cccccc;letter-spacing:-0.477px;-webkit-text-stroke:0.08px #ccc">pages</div>
<svg class="a" style="left:242.2px;top:173.64px;" width="3" height="4" viewBox="0 0 3 4"><path d="M0.5 0.5 L2.4 1.8 L0.5 3.1Z" fill="#b8b8b8"/></svg>
<svg class="a" style="left:248.6px;top:172.84px;" width="7" height="5.4" viewBox="0 0 7 5.4"><path d="M0.2 0.2 H2.6 L3.3 1 H6.8 V5.2 H0.2Z" fill="#90a4ae"/></svg>
<div class="a " style="left:258.3px;top:173.09px;font-size:6.7px;line-height:6.7px;color:#cccccc;letter-spacing:-0.363px;-webkit-text-stroke:0.08px #ccc">tips</div>
<svg class="a" style="left:242.2px;top:183.76999999999998px;" width="3" height="4" viewBox="0 0 3 4"><path d="M0.5 0.5 L2.4 1.8 L0.5 3.1Z" fill="#b8b8b8"/></svg>
<svg class="a" style="left:248.6px;top:182.97px;" width="7" height="5.4" viewBox="0 0 7 5.4"><path d="M0.2 0.2 H2.6 L3.3 1 H6.8 V5.2 H0.2Z" fill="#8bc34a"/></svg>
<div class="a " style="left:258.3px;top:183.22px;font-size:6.7px;line-height:6.7px;color:#cccccc;letter-spacing:-0.311px;-webkit-text-stroke:0.08px #ccc">utils</div>
<div class="a" style="left:249px;top:192.70000000000002px;width:6px;height:6px;background:#e8c020;"></div>
<div class="a " style="left:251.5px;top:195.60px;font-size:2.6px;line-height:2.6px;color:#5a4a00;">js</div>
<div class="a " style="left:258.3px;top:193.35px;font-size:6.7px;line-height:6.7px;color:#cccccc;letter-spacing:-0.350px;-webkit-text-stroke:0.08px #ccc">adConfig.js</div>
<div class="a" style="left:249px;top:202.83px;width:6px;height:6px;background:#e8c020;"></div>
<div class="a " style="left:251.5px;top:205.73px;font-size:2.6px;line-height:2.6px;color:#5a4a00;">js</div>
<div class="a " style="left:258.3px;top:203.48px;font-size:6.7px;line-height:6.7px;color:#cccccc;letter-spacing:-0.374px;-webkit-text-stroke:0.08px #ccc">app.js</div>
<div class="a" style="left:233px;top:211.06px;width:91px;height:9.9px;background:#3a3a3a;"></div>
<svg class="a" style="left:248.7px;top:212.86px" width="6.8" height="6" viewBox="0 0 8 7"><path d="M2.2 0.6 Q1.1 0.6 1.1 1.8 V2.6 Q1.1 3.5 0.3 3.5 Q1.1 3.5 1.1 4.4 V5.2 Q1.1 6.4 2.2 6.4 M5.8 0.6 Q6.9 0.6 6.9 1.8 V2.6 Q6.9 3.5 7.7 3.5 Q6.9 3.5 6.9 4.4 V5.2 Q6.9 6.4 5.8 6.4 M2.9 5.6 H5.1" fill="none" stroke="#e5b532" stroke-width="0.85"/></svg>
<div class="a " style="left:258.3px;top:213.61px;font-size:6.7px;line-height:6.7px;color:#cccccc;letter-spacing:-0.378px;-webkit-text-stroke:0.08px #ccc">app.json</div>
<div class="a " style="left:249.3px;top:222.79px;font-size:6.6px;line-height:6.6px;color:#3a9ee8;font-weight:bold">3</div>
<div class="a " style="left:258.3px;top:223.74px;font-size:6.7px;line-height:6.7px;color:#cccccc;letter-spacing:-0.417px;-webkit-text-stroke:0.08px #ccc">app.wxss</div>
<svg class="a" style="left:248.7px;top:233.12000000000003px" width="6.8" height="6" viewBox="0 0 8 7"><path d="M2.2 0.6 Q1.1 0.6 1.1 1.8 V2.6 Q1.1 3.5 0.3 3.5 Q1.1 3.5 1.1 4.4 V5.2 Q1.1 6.4 2.2 6.4 M5.8 0.6 Q6.9 0.6 6.9 1.8 V2.6 Q6.9 3.5 7.7 3.5 Q6.9 3.5 6.9 4.4 V5.2 Q6.9 6.4 5.8 6.4 M2.9 5.6 H5.1" fill="none" stroke="#e5b532" stroke-width="0.85"/></svg>
<div class="a " style="left:258.3px;top:233.87px;font-size:6.7px;line-height:6.7px;color:#cccccc;letter-spacing:-0.313px;-webkit-text-stroke:0.08px #ccc">project.config.json</div>
<svg class="a" style="left:248.7px;top:243.25000000000003px" width="6.8" height="6" viewBox="0 0 8 7"><path d="M2.2 0.6 Q1.1 0.6 1.1 1.8 V2.6 Q1.1 3.5 0.3 3.5 Q1.1 3.5 1.1 4.4 V5.2 Q1.1 6.4 2.2 6.4 M5.8 0.6 Q6.9 0.6 6.9 1.8 V2.6 Q6.9 3.5 7.7 3.5 Q6.9 3.5 6.9 4.4 V5.2 Q6.9 6.4 5.8 6.4 M2.9 5.6 H5.1" fill="none" stroke="#e5b532" stroke-width="0.85"/></svg>
<div class="a " style="left:258.3px;top:244.00px;font-size:6.7px;line-height:6.7px;color:#cccccc;letter-spacing:-0.287px;-webkit-text-stroke:0.08px #ccc">project.private.config.js...</div>
<svg class="a" style="left:248.7px;top:253.38000000000002px" width="6.8" height="6" viewBox="0 0 8 7"><path d="M2.2 0.6 Q1.1 0.6 1.1 1.8 V2.6 Q1.1 3.5 0.3 3.5 Q1.1 3.5 1.1 4.4 V5.2 Q1.1 6.4 2.2 6.4 M5.8 0.6 Q6.9 0.6 6.9 1.8 V2.6 Q6.9 3.5 7.7 3.5 Q6.9 3.5 6.9 4.4 V5.2 Q6.9 6.4 5.8 6.4 M2.9 5.6 H5.1" fill="none" stroke="#e5b532" stroke-width="0.85"/></svg>
<div class="a " style="left:258.3px;top:254.13px;font-size:6.7px;line-height:6.7px;color:#cccccc;letter-spacing:-0.357px;-webkit-text-stroke:0.08px #ccc">sitemap.json</div>
<div class="a" style="left:324px;top:39px;width:533px;height:14px;background:#373737;"></div>
<div class="a" style="left:324px;top:53px;width:533px;height:289px;background:#2d2d2d;"></div>
<div class="a" style="left:324px;top:39px;width:1.7px;height:303px;background:#262626;"></div>
<div class="a" style="left:325.7px;top:39px;width:53.7px;height:14px;background:#2d2d2d;"></div>
<svg class="a" style="left:329px;top:42.8px" width="8" height="6.6" viewBox="0 0 8 7"><path d="M2.2 0.6 Q1.1 0.6 1.1 1.8 V2.6 Q1.1 3.5 0.3 3.5 Q1.1 3.5 1.1 4.4 V5.2 Q1.1 6.4 2.2 6.4 M5.8 0.6 Q6.9 0.6 6.9 1.8 V2.6 Q6.9 3.5 7.7 3.5 Q6.9 3.5 6.9 4.4 V5.2 Q6.9 6.4 5.8 6.4 M2.9 5.6 H5.1" fill="none" stroke="#e5b532" stroke-width="0.85"/></svg>
<div class="a " style="left:339.3px;top:43.55px;font-size:6.9px;line-height:6.9px;color:#e0e0e0;letter-spacing:-0.469px;-webkit-text-stroke:0">app.json</div>
<svg class="a" style="left:369.5px;top:43.8px;" width="6" height="6" viewBox="0 0 6 6"><path d="M0.6 0.6 L5 5 M5 0.6 L0.6 5" stroke="#e0e0e0" stroke-width="0.8"/></svg>
<svg class="a" style="left:829.5px;top:42.8px;" width="8" height="7" viewBox="0 0 8 7"><rect x="0.6" y="0.6" width="6.4" height="5.8" rx="0.6" fill="none" stroke="#c8c8c8" stroke-width="0.7"/><path d="M3.8 0.6 V6.4" stroke="#c8c8c8" stroke-width="0.7"/></svg>
<div class="a" style="left:844.8px;top:46px;width:1.1px;height:1.1px;background:#c8c8c8;border-radius:0.5px"></div>
<div class="a" style="left:847.1999999999999px;top:46px;width:1.1px;height:1.1px;background:#c8c8c8;border-radius:0.5px"></div>
<div class="a" style="left:849.5999999999999px;top:46px;width:1.1px;height:1.1px;background:#c8c8c8;border-radius:0.5px"></div>
<svg class="a" style="left:328px;top:55.3px;" width="7" height="6" viewBox="0 0 7 6"><rect x="0" y="0" width="7" height="5.6" fill="#4a4a4a"/><path d="M0 1.4 H7 M0 2.8 H7 M0 4.2 H7" stroke="#3c3c3c" stroke-width="0.4"/></svg>
<svg class="a" style="left:342.3px;top:55px;" width="7" height="7" viewBox="0 0 7 7"><path d="M0.8 0.5 H5.4 V6.5 L3.1 4.8 L0.8 6.5Z" fill="none" stroke="#8a8a8a" stroke-width="0.7"/></svg>
<svg class="a" style="left:355.8px;top:55.5px;" width="7" height="6" viewBox="0 0 7 6"><path d="M6.4 3 H0.8 M3 0.8 L0.8 3 L3 5.2" fill="none" stroke="#a8a8a8" stroke-width="0.7"/></svg>
<svg class="a" style="left:368.8px;top:55.5px;" width="7" height="6" viewBox="0 0 7 6"><path d="M0.6 3 H6.2 M4 0.8 L6.2 3 L4 5.2" fill="none" stroke="#5a5a5a" stroke-width="0.7"/></svg>
<svg class="a" style="left:382.7px;top:55.4px" width="7.2" height="6" viewBox="0 0 8 7"><path d="M2.2 0.6 Q1.1 0.6 1.1 1.8 V2.6 Q1.1 3.5 0.3 3.5 Q1.1 3.5 1.1 4.4 V5.2 Q1.1 6.4 2.2 6.4 M5.8 0.6 Q6.9 0.6 6.9 1.8 V2.6 Q6.9 3.5 7.7 3.5 Q6.9 3.5 6.9 4.4 V5.2 Q6.9 6.4 5.8 6.4 M2.9 5.6 H5.1" fill="none" stroke="#e5b532" stroke-width="0.85"/></svg>
<div class="a " style="left:392.5px;top:56.05px;font-size:6.5px;line-height:6.5px;color:#aaaaaa;letter-spacing:-0.325px;-webkit-text-stroke:0">app.json</div>
<svg class="a" style="left:417.6px;top:55.6px;" width="4" height="6" viewBox="0 0 4 6"><path d="M0.8 0.6 L3 2.9 L0.8 5.2" fill="none" stroke="#b0b0b0" stroke-width="0.75"/></svg>
<svg class="a" style="left:424.4px;top:55.8px" width="5.8" height="5.4" viewBox="0 0 8 7"><path d="M2.2 0.5 Q1 0.5 1 1.8 V2.6 Q1 3.4 0.3 3.4 Q1 3.4 1 4.2 V5 Q1 6.3 2.2 6.3 M5.8 0.5 Q7 0.5 7 1.8 V2.6 Q7 3.4 7.7 3.4 Q7 3.4 7 4.2 V5 Q7 6.3 5.8 6.3" fill="none" stroke="#b0b0b0" stroke-width="0.9"/></svg>
<div class="a " style="left:432.7px;top:56.05px;font-size:6.5px;line-height:6.5px;color:#aaaaaa;letter-spacing:-0.395px;-webkit-text-stroke:0">window</div>
<svg class="a" style="left:455.6px;top:55.6px;" width="4" height="6" viewBox="0 0 4 6"><path d="M0.8 0.6 L3 2.9 L0.8 5.2" fill="none" stroke="#b0b0b0" stroke-width="0.75"/></svg>
<svg class="a" style="left:463.4px;top:55.8px;" width="6" height="6" viewBox="0 0 6 6"><rect x="0.4" y="0.4" width="5.4" height="4.8" rx="0.4" fill="none" stroke="#b0b0b0" stroke-width="0.65"/><path d="M1.6 2.3 H4.6 M1.6 3.5 H3.6" stroke="#b0b0b0" stroke-width="0.55"/></svg>
<div class="a " style="left:471px;top:56.05px;font-size:6.5px;line-height:6.5px;color:#aaaaaa;letter-spacing:-0.310px;-webkit-text-stroke:0">navigationBarTitleText</div>
<div class="a" style="left:854px;top:63.2px;width:3px;height:52.4px;background:#474747;"></div>
<div class="a" style="left:854px;top:101px;width:3px;height:1.2px;background:#5a5a5a;"></div>
<div class="a" style="left:363.3px;top:78px;width:0.7px;height:264px;background:#3e3e3e;"></div>
<div class="a" style="left:379.3px;top:93px;width:0.7px;height:124px;background:#3e3e3e;"></div>
<div class="a" style="left:363.5px;top:269px;width:493.5px;height:15px;background:#3f3f3f;"></div>
<div class="a" style="left:419.8px;top:240px;width:4.4px;height:14.5px;background:#1e2a20;box-shadow:inset 0 0 0 0.6px #707070"></div>
<div class="a" style="left:379.2px;top:328.2px;width:4.5px;height:13.8px;background:#1e2a20;box-shadow:inset 0 0 0 0.6px #707070"></div>
<div class="a" style="left:379.3px;top:254.2px;width:40.5px;height:0.6px;background:#6e4a72;"></div>
<div class="a" style="left:379.3px;top:254.2px;width:0.6px;height:75px;background:#6e4a72;"></div>
<div class="a m" style="left:321px;width:30.5px;text-align:right;top:67.60px;font-size:7.8px;line-height:7.8px;letter-spacing:-0.3px;color:#4c4c4c">1</div>
<div class="a m" style="left:364px;top:68.60px;font-size:7.2px;line-height:7.2px;letter-spacing:-0.27px;color:#d0d0d0;-webkit-text-stroke:0.18px currentColor"><span style="color:#f0c020">{</span></div>
<div class="a m" style="left:321px;width:30.5px;text-align:right;top:82.33px;font-size:7.8px;line-height:7.8px;letter-spacing:-0.3px;color:#4c4c4c">2</div>
<div class="a m" style="left:380px;top:83.33px;font-size:7.2px;line-height:7.2px;letter-spacing:-0.27px;color:#d0d0d0;-webkit-text-stroke:0.18px currentColor"><span style="color:#4fb3e0">"</span><span style="color:#d8d8d8">pages</span><span style="color:#4fb3e0">"</span><span style="color:#d0d0d0">: </span><span style="color:#c678dd">[</span></div>
<div class="a m" style="left:321px;width:30.5px;text-align:right;top:97.06px;font-size:7.8px;line-height:7.8px;letter-spacing:-0.3px;color:#4c4c4c">3</div>
<div class="a m" style="left:396px;top:98.06px;font-size:7.2px;line-height:7.2px;letter-spacing:-0.27px;color:#d0d0d0;-webkit-text-stroke:0.18px currentColor"><span style="color:#4fb3e0">"</span><span style="color:#de6c5a">pages/index/index</span><span style="color:#4fb3e0">"</span><span style="color:#4fb3e0">,</span></div>
<div class="a m" style="left:321px;width:30.5px;text-align:right;top:111.79px;font-size:7.8px;line-height:7.8px;letter-spacing:-0.3px;color:#4c4c4c">4</div>
<div class="a m" style="left:396px;top:112.79px;font-size:7.2px;line-height:7.2px;letter-spacing:-0.27px;color:#d0d0d0;-webkit-text-stroke:0.18px currentColor"><span style="color:#4fb3e0">"</span><span style="color:#de6c5a">pages/lunar/index</span><span style="color:#4fb3e0">"</span><span style="color:#4fb3e0">,</span></div>
<div class="a m" style="left:321px;width:30.5px;text-align:right;top:126.52px;font-size:7.8px;line-height:7.8px;letter-spacing:-0.3px;color:#4c4c4c">5</div>
<div class="a m" style="left:396px;top:127.52px;font-size:7.2px;line-height:7.2px;letter-spacing:-0.27px;color:#d0d0d0;-webkit-text-stroke:0.18px currentColor"><span style="color:#4fb3e0">"</span><span style="color:#de6c5a">pages/festival/index</span><span style="color:#4fb3e0">"</span><span style="color:#4fb3e0">,</span></div>
<div class="a m" style="left:321px;width:30.5px;text-align:right;top:141.25px;font-size:7.8px;line-height:7.8px;letter-spacing:-0.3px;color:#4c4c4c">6</div>
<div class="a m" style="left:396px;top:142.25px;font-size:7.2px;line-height:7.2px;letter-spacing:-0.27px;color:#d0d0d0;-webkit-text-stroke:0.18px currentColor"><span style="color:#4fb3e0">"</span><span style="color:#de6c5a">pages/discovery/index</span><span style="color:#4fb3e0">"</span><span style="color:#4fb3e0">,</span></div>
<div class="a m" style="left:321px;width:30.5px;text-align:right;top:155.98px;font-size:7.8px;line-height:7.8px;letter-spacing:-0.3px;color:#4c4c4c">7</div>
<div class="a m" style="left:396px;top:156.98px;font-size:7.2px;line-height:7.2px;letter-spacing:-0.27px;color:#d0d0d0;-webkit-text-stroke:0.18px currentColor"><span style="color:#4fb3e0">"</span><span style="color:#de6c5a">pages/astro/index</span><span style="color:#4fb3e0">"</span><span style="color:#4fb3e0">,</span></div>
<div class="a m" style="left:321px;width:30.5px;text-align:right;top:170.71px;font-size:7.8px;line-height:7.8px;letter-spacing:-0.3px;color:#4c4c4c">8</div>
<div class="a m" style="left:396px;top:171.71px;font-size:7.2px;line-height:7.2px;letter-spacing:-0.27px;color:#d0d0d0;-webkit-text-stroke:0.18px currentColor"><span style="color:#4fb3e0">"</span><span style="color:#de6c5a">pages/mryy/index</span><span style="color:#4fb3e0">"</span><span style="color:#4fb3e0">,</span></div>
<div class="a m" style="left:321px;width:30.5px;text-align:right;top:185.44px;font-size:7.8px;line-height:7.8px;letter-spacing:-0.3px;color:#4c4c4c">9</div>
<div class="a m" style="left:396px;top:186.44px;font-size:7.2px;line-height:7.2px;letter-spacing:-0.27px;color:#d0d0d0;-webkit-text-stroke:0.18px currentColor"><span style="color:#4fb3e0">"</span><span style="color:#de6c5a">pages/weather/index</span><span style="color:#4fb3e0">"</span><span style="color:#4fb3e0">,</span></div>
<div class="a m" style="left:321px;width:30.5px;text-align:right;top:200.17px;font-size:7.8px;line-height:7.8px;letter-spacing:-0.3px;color:#4c4c4c">10</div>
<div class="a m" style="left:396px;top:201.17px;font-size:7.2px;line-height:7.2px;letter-spacing:-0.27px;color:#d0d0d0;-webkit-text-stroke:0.18px currentColor"><span style="color:#4fb3e0">"</span><span style="color:#de6c5a">pages/webview/webview</span><span style="color:#4fb3e0">"</span><span style="color:#4fb3e0">,</span></div>
<div class="a m" style="left:321px;width:30.5px;text-align:right;top:214.90px;font-size:7.8px;line-height:7.8px;letter-spacing:-0.3px;color:#4c4c4c">11</div>
<div class="a m" style="left:396px;top:215.90px;font-size:7.2px;line-height:7.2px;letter-spacing:-0.27px;color:#d0d0d0;-webkit-text-stroke:0.18px currentColor"><span style="color:#4fb3e0">"</span><span style="color:#de6c5a">components/adCard/adCard</span><span style="color:#4fb3e0">"</span></div>
<div class="a m" style="left:321px;width:30.5px;text-align:right;top:229.63px;font-size:7.8px;line-height:7.8px;letter-spacing:-0.3px;color:#4c4c4c">12</div>
<div class="a m" style="left:380px;top:230.63px;font-size:7.2px;line-height:7.2px;letter-spacing:-0.27px;color:#d0d0d0;-webkit-text-stroke:0.18px currentColor"><span style="color:#c678dd">]</span><span style="color:#4fb3e0">,</span></div>
<div class="a m" style="left:321px;width:30.5px;text-align:right;top:244.36px;font-size:7.8px;line-height:7.8px;letter-spacing:-0.3px;color:#4c4c4c">13</div>
<div class="a m" style="left:380px;top:245.36px;font-size:7.2px;line-height:7.2px;letter-spacing:-0.27px;color:#d0d0d0;-webkit-text-stroke:0.18px currentColor"><span style="color:#4fb3e0">"</span><span style="color:#d8d8d8">window</span><span style="color:#4fb3e0">"</span><span style="color:#d0d0d0">: </span><span style="color:#c678dd">{</span></div>
<div class="a m" style="left:321px;width:30.5px;text-align:right;top:259.09px;font-size:7.8px;line-height:7.8px;letter-spacing:-0.3px;color:#4c4c4c">14</div>
<div class="a m" style="left:396px;top:260.09px;font-size:7.2px;line-height:7.2px;letter-spacing:-0.27px;color:#d0d0d0;-webkit-text-stroke:0.18px currentColor"><span style="color:#4fb3e0">"</span><span style="color:#a4cce8">navigationBarBackgroundColor</span><span style="color:#4fb3e0">"</span><span style="color:#d0d0d0">: </span><span style="color:#4fb3e0">"</span><span style="color:#de6c5a">#d03f3f</span><span style="color:#4fb3e0">"</span><span style="color:#4fb3e0">,</span></div>
<div class="a m" style="left:321px;width:30.5px;text-align:right;top:273.82px;font-size:7.8px;line-height:7.8px;letter-spacing:-0.3px;color:#c8c8c8">15</div>
<div class="a m" style="left:396px;top:274.82px;font-size:7.2px;line-height:7.2px;letter-spacing:-0.27px;color:#d0d0d0;-webkit-text-stroke:0.18px currentColor"><span style="color:#4fb3e0">"</span><span style="color:#a4cce8">navigationBarTitleText</span><span style="color:#4fb3e0">"</span><span style="color:#d0d0d0">: </span><span style="color:#4fb3e0">"</span><span style="color:#de6c5a">ASP300源码_万年历</span><span style="color:#4fb3e0">"</span><span style="color:#4fb3e0">,</span></div>
<div class="a m" style="left:321px;width:30.5px;text-align:right;top:288.55px;font-size:7.8px;line-height:7.8px;letter-spacing:-0.3px;color:#4c4c4c">16</div>
<div class="a m" style="left:396px;top:289.55px;font-size:7.2px;line-height:7.2px;letter-spacing:-0.27px;color:#d0d0d0;-webkit-text-stroke:0.18px currentColor"><span style="color:#4fb3e0">"</span><span style="color:#a4cce8">navigationBarTextStyle</span><span style="color:#4fb3e0">"</span><span style="color:#d0d0d0">: </span><span style="color:#4fb3e0">"</span><span style="color:#de6c5a">white</span><span style="color:#4fb3e0">"</span><span style="color:#4fb3e0">,</span></div>
<div class="a m" style="left:321px;width:30.5px;text-align:right;top:303.28px;font-size:7.8px;line-height:7.8px;letter-spacing:-0.3px;color:#4c4c4c">17</div>
<div class="a m" style="left:396px;top:304.28px;font-size:7.2px;line-height:7.2px;letter-spacing:-0.27px;color:#d0d0d0;-webkit-text-stroke:0.18px currentColor"><span style="color:#4fb3e0">"</span><span style="color:#a4cce8">backgroundTextStyle</span><span style="color:#4fb3e0">"</span><span style="color:#d0d0d0">: </span><span style="color:#4fb3e0">"</span><span style="color:#de6c5a">light</span><span style="color:#4fb3e0">"</span><span style="color:#4fb3e0">,</span></div>
<div class="a m" style="left:321px;width:30.5px;text-align:right;top:318.01px;font-size:7.8px;line-height:7.8px;letter-spacing:-0.3px;color:#4c4c4c">18</div>
<div class="a m" style="left:396px;top:319.01px;font-size:7.2px;line-height:7.2px;letter-spacing:-0.27px;color:#d0d0d0;-webkit-text-stroke:0.18px currentColor"><span style="color:#4fb3e0">"</span><span style="color:#a4cce8">enablePullDownRefresh</span><span style="color:#4fb3e0">"</span><span style="color:#d0d0d0">: </span><span style="color:#de6c5a">false</span></div>
<div class="a m" style="left:321px;width:30.5px;text-align:right;top:332.74px;font-size:7.8px;line-height:7.8px;letter-spacing:-0.3px;color:#4c4c4c">19</div>
<div class="a m" style="left:380px;top:333.74px;font-size:7.2px;line-height:7.2px;letter-spacing:-0.27px;color:#d0d0d0;-webkit-text-stroke:0.18px currentColor"><span style="color:#c678dd">}</span><span style="color:#4fb3e0">,</span></div>
<svg class="a" style="left:354.8px;top:65.0px;" width="6" height="4" viewBox="0 0 6 4"><path d="M0.7 0.8 L2.7 2.8 L4.7 0.8" fill="none" stroke="#b0b0b0" stroke-width="0.7"/></svg>
<svg class="a" style="left:354.8px;top:79.73px;" width="6" height="4" viewBox="0 0 6 4"><path d="M0.7 0.8 L2.7 2.8 L4.7 0.8" fill="none" stroke="#b0b0b0" stroke-width="0.7"/></svg>
<svg class="a" style="left:354.8px;top:241.76px;" width="6" height="4" viewBox="0 0 6 4"><path d="M0.7 0.8 L2.7 2.8 L4.7 0.8" fill="none" stroke="#b0b0b0" stroke-width="0.7"/></svg>
<div class="a" style="left:324px;top:342px;width:533px;height:114px;background:#242424;"></div>
<div class="a" style="left:324px;top:341.5px;width:533px;height:14px;background:#2e2e2e;"></div>
<div class="a" style="left:324px;top:355.5px;width:533px;height:13.7px;background:#292929;"></div>
<div class="a" style="left:324px;top:369.2px;width:533px;height:0.6px;background:#333;"></div>
<div class="a " style="left:333.6px;top:346.75px;font-size:5.3px;line-height:5.3px;color:#e6e6e6;">调试器</div>
<div class="a" style="left:333.6px;top:354.6px;width:15.8px;height:0.9px;background:#c8c8c8;"></div>
<div class="a" style="left:352.9px;top:345.9px;width:15.2px;height:7.9px;background:#e0443e;border-radius:4px"></div>
<div class="a " style="left:355.2px;top:347.25px;font-size:5.3px;line-height:5.3px;color:#fff;">6, 16</div>
<div class="a " style="left:376.5px;top:346.75px;font-size:5.3px;line-height:5.3px;color:#9a9a9a;">问题</div>
<div class="a " style="left:396.7px;top:346.75px;font-size:5.3px;line-height:5.3px;color:#9a9a9a;">输出</div>
<div class="a " style="left:416px;top:346.75px;font-size:5.3px;line-height:5.3px;color:#9a9a9a;">终端</div>
<div class="a " style="left:435.2px;top:346.75px;font-size:5.3px;line-height:5.3px;color:#9a9a9a;">代码质量</div>
<svg class="a" style="left:831.5px;top:348px;" width="6" height="4" viewBox="0 0 6 4"><path d="M0.6 3.4 L3 1 L5.4 3.4" fill="none" stroke="#cfcfcf" stroke-width="0.8"/></svg>
<svg class="a" style="left:846px;top:347.8px;" width="5.5" height="5.5" viewBox="0 0 5.5 5.5"><path d="M0.5 0.5 L5 5 M5 0.5 L0.5 5" stroke="#cfcfcf" stroke-width="0.8"/></svg>
<svg class="a" style="left:328.6px;top:358.6px;" width="7" height="7" viewBox="0 0 7 7"><path d="M5.5 2.5 V0.6 H0.6 V5.5 H2.5" fill="none" stroke="#a0a0a0" stroke-width="0.6"/><path d="M3.2 3.2 L6.2 4.6 L4.8 4.9 L5.8 6.2 L5.3 6.6 L4.4 5.3 L3.6 6.2Z" fill="#c8c8c8"/></svg>
<div class="a" style="left:340.6px;top:357px;width:0.6px;height:10px;background:#444;"></div>
<div class="a" style="left:343.6px;top:356.4px;width:24.5px;height:11.4px;background:#000;"></div>
<div class="a " style="left:348.5px;top:359.85px;font-size:5.9px;line-height:5.9px;color:#e8e8e8;letter-spacing:-0.115px;-webkit-text-stroke:0.1px #e8e8e8">Wxml</div>
<div class="a " style="left:373.9px;top:359.85px;font-size:5.9px;line-height:5.9px;color:#e8e8e8;letter-spacing:-0.341px;-webkit-text-stroke:0.1px #e8e8e8">Console</div>
<div class="a " style="left:404px;top:359.85px;font-size:5.9px;line-height:5.9px;color:#e8e8e8;letter-spacing:-0.390px;-webkit-text-stroke:0.1px #e8e8e8">Sources</div>
<div class="a " style="left:434px;top:359.85px;font-size:5.9px;line-height:5.9px;color:#e8e8e8;letter-spacing:-0.106px;-webkit-text-stroke:0.1px #e8e8e8">Network</div>
<div class="a " style="left:465.4px;top:359.85px;font-size:5.9px;line-height:5.9px;color:#e8e8e8;letter-spacing:-0.247px;-webkit-text-stroke:0.1px #e8e8e8">Performance</div>
<div class="a " style="left:507.3px;top:359.85px;font-size:5.9px;line-height:5.9px;color:#e8e8e8;letter-spacing:-0.161px;-webkit-text-stroke:0.1px #e8e8e8">Memory</div>
<div class="a " style="left:538.7px;top:359.85px;font-size:5.9px;line-height:5.9px;color:#e8e8e8;letter-spacing:-0.277px;-webkit-text-stroke:0.1px #e8e8e8">AppData</div>
<div class="a " style="left:570.3px;top:359.85px;font-size:5.9px;line-height:5.9px;color:#e8e8e8;letter-spacing:0.173px;-webkit-text-stroke:0.1px #e8e8e8">Storage</div>
<div class="a " style="left:599.7px;top:359.85px;font-size:5.9px;line-height:5.9px;color:#e8e8e8;letter-spacing:-0.159px;-webkit-text-stroke:0.1px #e8e8e8">Security</div>
<div class="a " style="left:634.5px;top:359.85px;font-size:5.9px;line-height:5.9px;color:#e8e8e8;letter-spacing:-0.319px;-webkit-text-stroke:0.1px #e8e8e8">Sensor</div>
<div class="a " style="left:661.8px;top:359.85px;font-size:5.9px;line-height:5.9px;color:#e8e8e8;letter-spacing:-0.132px;-webkit-text-stroke:0.1px #e8e8e8">Mock</div>
<div class="a " style="left:685.7px;top:359.85px;font-size:5.9px;line-height:5.9px;color:#e8e8e8;letter-spacing:0.021px;-webkit-text-stroke:0.1px #e8e8e8">Audits</div>
<div class="a " style="left:712.5px;top:359.85px;font-size:5.9px;line-height:5.9px;color:#e8e8e8;letter-spacing:-0.118px;-webkit-text-stroke:0.1px #e8e8e8">Vulnerability</div>
<div class="a" style="left:789.6px;top:360.2px;width:3.9px;height:3.9px;background:#e84040;border-radius:2px"></div>
<div class="a " style="left:795.6px;top:359.75px;font-size:5.3px;line-height:5.3px;color:#ddd;">6</div>
<svg class="a" style="left:801.3px;top:359.7px;" width="5.5" height="5" viewBox="0 0 5.5 5"><path d="M2.75 0.3 L5.3 4.7 H0.2Z" fill="#f0c020"/></svg>
<div class="a " style="left:807.8px;top:359.75px;font-size:5.3px;line-height:5.3px;color:#ddd;">16</div>
<div class="a" style="left:819px;top:357.5px;width:0.6px;height:9px;background:#444;"></div>
<svg class="a" style="left:823.5px;top:358.5px;" width="7" height="7" viewBox="0 0 7 7"><circle cx="3.5" cy="3.5" r="2.2" fill="none" stroke="#c8c8c8" stroke-width="1.6" stroke-dasharray="1.1 0.6"/><circle cx="3.5" cy="3.5" r="1.2" fill="none" stroke="#c8c8c8" stroke-width="0.6"/></svg>
<div class="a" style="left:840px;top:358.8px;width:1px;height:1px;background:#c8c8c8;"></div>
<div class="a" style="left:840px;top:360.8px;width:1px;height:1px;background:#c8c8c8;"></div>
<div class="a" style="left:840px;top:362.8px;width:1px;height:1px;background:#c8c8c8;"></div>
<svg class="a" style="left:849px;top:358.5px;" width="9" height="8" viewBox="0 0 9 8"><rect x="0.6" y="2.4" width="6" height="5" fill="none" stroke="#9a9a9a" stroke-width="0.6"/><path d="M2.5 2.4 V0.6 H8.5 V5.6 H6.6" fill="none" stroke="#9a9a9a" stroke-width="0.6"/></svg>
<div class="a m" style="left:331px;top:372.7px;font-size:5px;line-height:5.2px"><span style="color:#5db0d7">&lt;page&gt;</span></div>
<svg class="a" style="left:331.6px;top:379.2px;" width="4" height="4" viewBox="0 0 4 4"><path d="M0.5 0.3 L3.3 1.9 L0.5 3.5Z" fill="#d0d0d0"/></svg>
<div class="a m" style="left:336.6px;top:380.2px;font-size:5px;line-height:5.2px"><span style="color:#5db0d7">&lt;view </span><span style="color:#9bbbdc">class</span><span style="color:#5db0d7">=</span><span style="color:#f29766">&quot;container&quot;</span><span style="color:#5db0d7">&gt;</span><span style="color:#ddd">…</span><span style="color:#5db0d7">&lt;/view&gt;</span></div>
<div class="a m" style="left:331px;top:388.1px;font-size:5px;line-height:5.2px"><span style="color:#5db0d7">&lt;/page&gt;</span></div>
<div class="a" style="left:711.2px;top:369.5px;width:0.7px;height:86.5px;background:#3a3a3a;"></div>
<div class="a" style="left:711.9px;top:369.8px;width:145.1px;height:11px;background:#272727;"></div>
<div class="a" style="left:711.9px;top:369px;width:22px;height:11.6px;background:#000;"></div>
<div class="a " style="left:715.6px;top:372.65px;font-size:5.9px;line-height:5.9px;color:#e8e8e8;letter-spacing:-0.393px;-webkit-text-stroke:0.1px #e8e8e8">Styles</div>
<div class="a " style="left:738.8px;top:372.65px;font-size:5.9px;line-height:5.9px;color:#e8e8e8;letter-spacing:-0.217px;-webkit-text-stroke:0.1px #e8e8e8">Computed</div>
<div class="a " style="left:773.8px;top:372.65px;font-size:5.9px;line-height:5.9px;color:#e8e8e8;letter-spacing:-0.272px;-webkit-text-stroke:0.1px #e8e8e8">Dataset</div>
<div class="a " style="left:801.1px;top:372.65px;font-size:5.9px;line-height:5.9px;color:#e8e8e8;letter-spacing:-0.192px;-webkit-text-stroke:0.1px #e8e8e8">Component Data</div>
<div class="a " style="left:851.5px;top:371.30px;font-size:6px;line-height:6px;color:#aaa;">»</div>
<div class="a" style="left:711.9px;top:381.5px;width:145.1px;height:11px;background:#262626;"></div>
<div class="a" style="left:711.9px;top:392.3px;width:145.1px;height:0.6px;background:#333;"></div>
<div class="a " style="left:714.6px;top:384.60px;font-size:5.2px;line-height:5.2px;color:#777;">Filter</div>
<div class="a m" style="left:832.8px;top:384px;font-size:5.6px;line-height:6px;color:#ddd;font-weight:bold">.cls</div>
<div class="a " style="left:850.5px;top:383.50px;font-size:7px;line-height:7px;color:#888;">+</div>
</body></html>
